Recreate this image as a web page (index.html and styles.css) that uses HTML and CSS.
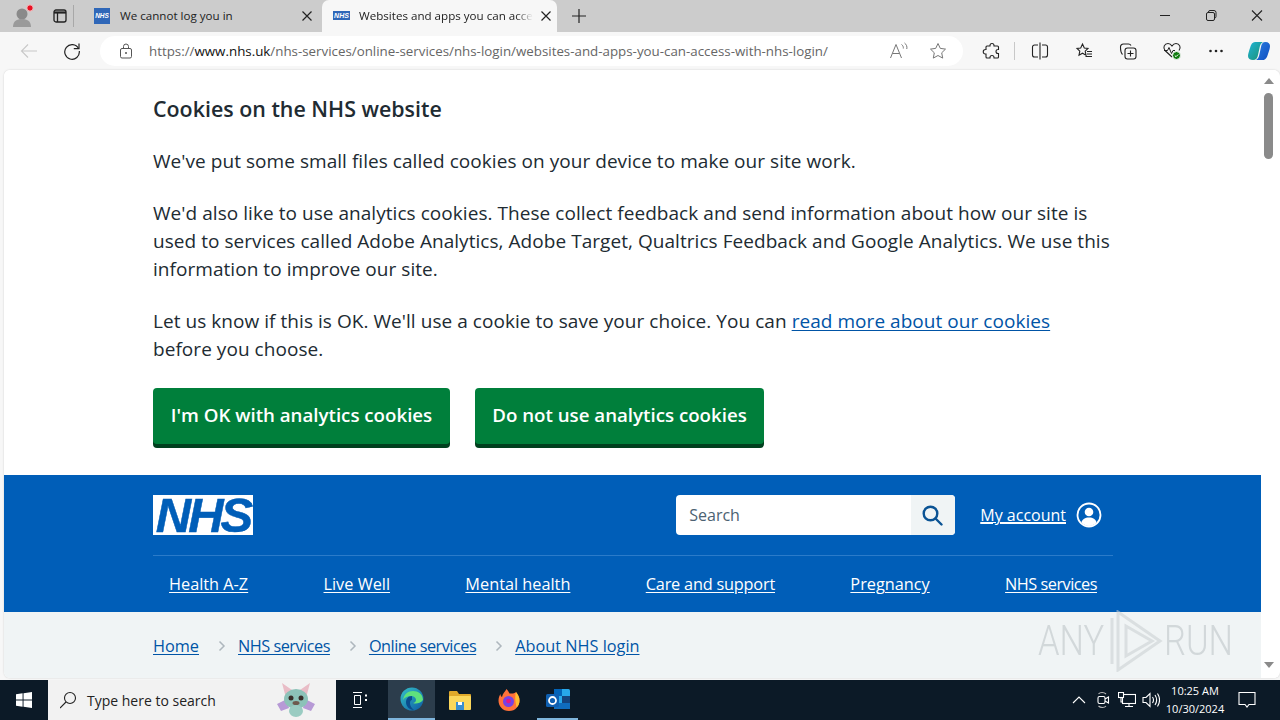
FILE: index.html
```html
<!DOCTYPE html>
<html lang="en">
<head>
<meta charset="utf-8">
<title>Websites and apps you can access with NHS login</title>
<link rel="stylesheet" href="styles.css">
</head>
<body>
<div class="desktop">
  <div class="tabstrip">
    <div class="strip-btn profile">
      <svg width="24" height="26" viewBox="-1 0 24 26"><circle cx="11" cy="11" r="5.500" fill="#8a8a8a"/><path d="M2 24c0-6 4-8 9-8s9 2 9 8z" fill="#9a9a9a"/><circle cx="19" cy="5" r="3.200" fill="#e81123" stroke="#f3c9c9"/></svg>
    </div>
    <div class="strip-btn tabs-icon">
      <svg width="16" height="16" viewBox="0 0 16 16" fill="none" stroke="#222" stroke-width="1.300"><rect x="2" y="2" width="12" height="12" rx="2"/><path d="M2 4.500h12" stroke-width="2.200"/><path d="M5.500 4v10"/></svg>
    </div>
    <div class="strip-sep"></div>
    <div class="tab">
      <span class="favicon favicon-big">NHS</span>
      <span class="tab-title">We cannot log you in</span>
      <svg class="tab-x" width="10" height="10" viewBox="0 0 10 10" stroke="#222" stroke-width="1.200"><path d="M0.500 0.500l9 9M9.500 0.500l-9 9"/></svg>
    </div>
    <div class="tab tab-active">
      <span class="favicon">NHS</span>
      <span class="tab-title">Websites and apps you can acce</span>
      <svg class="tab-x" width="10" height="10" viewBox="0 0 10 10" stroke="#222" stroke-width="1.200"><path d="M0.500 0.500l9 9M9.500 0.500l-9 9"/></svg>
    </div>
    <svg class="new-tab" width="16" height="16" viewBox="0 0 16 16" stroke="#222" stroke-width="1.200"><path d="M8 1v14M1 8h14"/></svg>
    <div class="win-controls">
      <svg width="46" height="32" viewBox="0 0 46 32" stroke="#222" fill="none"><path d="M18 15.500h10"/></svg>
      <svg width="46" height="32" viewBox="0 0 46 32" stroke="#222" fill="none"><rect x="18.500" y="12.500" width="8" height="8" rx="1.500"/><path d="M20.500 12.500v-.5a1.500 1.500 0 0 1 1.500-1.500h4a2 2 0 0 1 2 2v4a1.500 1.500 0 0 1-1.500 1.500"/></svg>
      <svg width="46" height="32" viewBox="0 0 46 32" stroke="#222" fill="none" stroke-width="1.100"><path d="M18 10.500l10 10M28 10.500l-10 10"/></svg>
    </div>
  </div>

  <div class="toolbar">
    <div class="tool-btn">
      <svg width="18" height="18" viewBox="-1 0 18 18" fill="none" stroke="#c8c8c8" stroke-width="1.100"><path d="M17 9H1.500M8 2.500L1.500 9 8 15.500"/></svg>
    </div>
    <div class="tool-btn">
      <svg width="18" height="18" viewBox="0 0 18 18" fill="none" stroke="#222" stroke-width="1.200"><path d="M15.500 6.500A7.300 7.300 0 1 0 16.300 9"/><path d="M16 1.500v5.200h-5.200"/></svg>
    </div>
    <div class="address">
      <svg class="lock" width="14" height="16" viewBox="0 0 14 16" fill="none" stroke="#555" stroke-width="1"><rect x="1.500" y="5.500" width="11" height="9.500" rx="1.500"/><path d="M4.500 5.500V3.500a2.500 2.500 0 0 1 5 0v2"/><circle cx="7" cy="10" r="1" fill="#555" stroke="none"/></svg>
      <span class="url"><span class="url-dim">https://</span>www.nhs.uk<span class="url-dim">/nhs-services/online-services/nhs-login/websites-and-apps-you-can-access-with-nhs-login/</span></span>
      <svg class="read-aloud" width="20" height="18" viewBox="0 0 20 18" fill="none" stroke="#777" stroke-width="1"><path d="M1.500 16L7 2.500 12.500 16M3.500 11.500h7"/><path d="M12.500 2.500c1.500 1 2 2.500 1.800 4M15.500 1c2 1.500 2.800 3.500 2.300 6"/></svg>
      <svg class="star" width="18" height="18" viewBox="0 0 18 18" fill="none" stroke="#777" stroke-width="1"><path d="M9 1.500l2.300 4.900 5.200.7-3.800 3.700 1 5.300L9 13.500l-4.700 2.600 1-5.300L1.500 7.100l5.200-.7z"/></svg>
    </div>
    <div class="tool-group">
      <div class="tool-btn">
        <svg width="18" height="18" viewBox="-1 0 18 18" fill="none" stroke="#222" stroke-width="1.100"><path d="M7 3.500a2 2 0 0 1 4 0v.5h3.500a1 1 0 0 1 1 1v2.500H15a2 2 0 0 0 0 4h.5V15a1 1 0 0 1-1 1H11v-.5a2 2 0 0 0-4 0v.5H4a1 1 0 0 1-1-1v-3H2.500a2 2 0 0 1 0-4.500H3V5a1 1 0 0 1 1-1h3z"/></svg>
      </div>
      <div class="tool-sep"></div>
      <div class="tool-btn">
        <svg width="18" height="18" viewBox="0 0 18 18" fill="none" stroke="#222" stroke-width="1.100"><path d="M7 3H3.500a2 2 0 0 0-2 2v8a2 2 0 0 0 2 2H7M11 3h3.500a2 2 0 0 1 2 2v8a2 2 0 0 1-2 2H11"/><path d="M9 .5v17"/></svg>
      </div>
      <div class="tool-btn">
        <svg width="18" height="18" viewBox="0 0 18 18" fill="none" stroke="#222" stroke-width="1.100"><path d="M7.500 2l1.800 4 3.700.5-2.800 2.600.8 4.100-3.500-2-3.500 2 .8-4.100L2 6.500 5.700 6z"/><path d="M12 9.500h5M12 12h5M10.500 14.500h6.500"/></svg>
      </div>
      <div class="tool-btn">
        <svg width="18" height="18" viewBox="0 0 18 18" fill="none" stroke="#222" stroke-width="1.100"><rect x="6" y="6" width="11" height="11" rx="2.500"/><path d="M11.500 8.500v6M8.500 11.500h6"/><path d="M3.500 12.500C2 11 1.500 9.500 1.500 5a3 3 0 0 1 3-3h5a3 3 0 0 1 2.500 1.500"/></svg>
      </div>
      <div class="tool-btn">
        <svg width="20" height="20" viewBox="0 0 20 20" fill="none"><path d="M10 16L3 9.500C.5 6.500 2.500 2.500 6 2.500c2 0 3 1 4 2.500 1-1.500 2-2.500 4-2.500 3.500 0 5.500 4 3 7" stroke="#222" stroke-width="1.100"/><path d="M2 9.500h3.500l1.500-3 2.500 6 1.500-3h2" stroke="#222" stroke-width="1"/><circle cx="14.500" cy="14.500" r="4" fill="#107c10" stroke="#f7f7f7"/><path d="M12.800 14.500l1.200 1.200 2.200-2.200" stroke="#fff"/></svg>
      </div>
      <div class="tool-btn">
        <svg width="16" height="4" viewBox="0 0 16 4" fill="#222"><circle cx="2.500" cy="2" r="1.300"/><circle cx="8" cy="2" r="1.300"/><circle cx="13.500" cy="2" r="1.300"/></svg>
      </div>
      <div class="tool-btn copilot">
        <svg width="24" height="24" viewBox="0 0 24 24"><defs><linearGradient id="cpa" x1="0" y1="0" x2="1" y2="1"><stop offset="0" stop-color="#1fb5d8"/><stop offset="1" stop-color="#1b8f6f"/></linearGradient><linearGradient id="cpb" x1="0" y1="0" x2="1" y2="1"><stop offset="0" stop-color="#2a7de1"/><stop offset="1" stop-color="#0f4fc0"/></linearGradient></defs><path d="M8 3h8c-2 1-3 3-3.500 6L11 16c-.5 3-2 5-5 5-3 0-5-1.500-5-4 0-2 1-5 2-8 1-4 2.500-6 5-6z" fill="url(#cpa)"/><path d="M16 21H9c2-1 3-3 3.500-6l1.500-7c.5-3 1.500-5 4.500-5 3 0 4.500 2 4.500 4 0 2-1 5-2 8-1 3.500-2.500 6-5 6z" fill="url(#cpb)"/></svg>
      </div>
    </div>
  </div>

  <div class="viewport">
    <main class="page">
      <section class="cookies">
        <div class="container">
          <h2 class="cookies-title">Cookies on the NHS website</h2>
          <p class="copy">We've put some small files called cookies on your device to make our site work.</p>
          <p class="copy">We'd also like to use analytics cookies. These collect feedback and send information about how our site is used to services called Adobe Analytics, Adobe Target, Qualtrics Feedback and Google Analytics. We use this information to improve our site.</p>
          <p class="copy">Let us know if this is OK. We'll use a cookie to save your choice. You can <a class="link" href="#">read more about our cookies</a> before you choose.</p>
          <div class="cookie-actions">
            <button class="btn btn-ok" type="button">I'm OK with analytics cookies</button>
            <button class="btn btn-no" type="button">Do not use analytics cookies</button>
          </div>
        </div>
      </section>
      <header class="site-header">
        <div class="container">
          <div class="header-top">
            <a class="nhs-logo" href="#">NHS</a>
            <form class="search">
              <span class="search-field">Search</span>
              <span class="search-btn">
                <svg width="22" height="22" viewBox="1 0 22 22" fill="none" stroke="#0b5394" stroke-width="2.400"><circle cx="9.500" cy="9.500" r="6.800"/><path d="M14.500 14.500l6 6" stroke-linecap="round"/></svg>
              </span>
            </form>
            <a class="account" href="#">
              <span class="account-text">My account</span>
              <svg width="26" height="26" viewBox="0 0 26 26"><circle cx="13" cy="13" r="11.500" fill="#005eb8" stroke="#fff" stroke-width="1.800"/><circle cx="13" cy="10" r="4.300" fill="#fff"/><path d="M5.500 20.500c.8-3.500 3.500-5 7.500-5s6.700 1.500 7.500 5c-2 2-4.500 3.500-7.500 3.500s-5.500-1.500-7.500-3.500z" fill="#fff"/></svg>
            </a>
          </div>
          <nav class="main-nav">
            <a href="#">Health A-Z</a>
            <a href="#">Live Well</a>
            <a href="#">Mental health</a>
            <a class="snug" href="#">Care and support</a>
            <a href="#">Pregnancy</a>
            <a class="tight" href="#">NHS services</a>
          </nav>
        </div>
      </header>
      <nav class="breadcrumb">
        <div class="container crumbs">
          <a class="link" href="#">Home</a>
          <svg class="crumb-sep" width="8" height="12" viewBox="0 0 8 12" fill="none" stroke="#aeb7bd" stroke-width="1.500"><path d="M1.500 1.500L6 6l-4.500 4.500"/></svg>
          <a class="link tight" href="#">NHS services</a>
          <svg class="crumb-sep" width="8" height="12" viewBox="0 0 8 12" fill="none" stroke="#aeb7bd" stroke-width="1.500"><path d="M1.500 1.500L6 6l-4.500 4.500"/></svg>
          <a class="link tight" href="#">Online services</a>
          <svg class="crumb-sep" width="8" height="12" viewBox="0 0 8 12" fill="none" stroke="#aeb7bd" stroke-width="1.500"><path d="M1.500 1.500L6 6l-4.500 4.500"/></svg>
          <a class="link" href="#">About NHS login</a>
        </div>
      </nav>
    </main>
    <div class="scrollbar">
      <span class="arrow-up"></span>
      <span class="thumb"></span>
      <span class="arrow-down"></span>
    </div>
    <div class="watermark" aria-hidden="true">
      <span class="wm-word">ANY</span>
      <svg width="60" height="62" viewBox="0 0 60 62" fill="none" stroke="rgba(200,205,208,.55)" stroke-width="3"><path d="M8 8v46M14 2v58l42-29z"/><path d="M22 16v30l26-15z"/></svg>
      <span class="wm-word">RUN</span>
    </div>
  </div>

  <footer class="taskbar">
    <div class="start">
      <svg width="16" height="16" viewBox="0 0 17 17" fill="#fff"><path d="M0 2.400l7-1v6.600H0zM8 1.300L17 0v8H8zM0 9h7v6.600l-7-1zM8 9h9v8l-9-1.300z"/></svg>
    </div>
    <div class="task-search">
      <svg width="18" height="18" viewBox="1 0 18 18" fill="none" stroke="#222" stroke-width="1.100"><circle cx="11" cy="7" r="5.500"/><path d="M7 11l-6 6"/></svg>
      <span class="task-search-text">Type here to search</span>
      <svg class="mascot" width="40" height="36" viewBox="0 0 40 36"><path d="M11 17L1 22l4 7 8-3zM29 17l10 5-4 7-8-3z" fill="#b79ad6"/><path d="M10 16L6 1l10 7zM30 16l4-15-10 7z" fill="#e9bcc6"/><ellipse cx="20" cy="17" rx="12" ry="10" fill="#8cc2b8"/><ellipse cx="20" cy="29" rx="7" ry="6" fill="#9accc2"/><circle cx="15" cy="16" r="2.500" fill="#3a2f2a"/><circle cx="25" cy="16" r="2.500" fill="#3a2f2a"/><ellipse cx="20" cy="21" rx="3.500" ry="2" fill="#6d5a4e"/></svg>
    </div>
    <div class="task-slot">
      <svg width="16" height="16" viewBox="0 0 16 16" fill="none" stroke="#fff"><path d="M1 .5h9M1 15.500h9M2.500 3.500h6v9h-6z"/><path d="M13 2.500h2v2h-2zM13 7h2v2h-2z" fill="#fff" stroke="none"/></svg>
    </div>
    <div class="task-slot task-app task-active">
      <svg width="24" height="24" viewBox="0 0 24 24"><defs><linearGradient id="edge" x1="0" y1="0" x2="1" y2="1"><stop offset="0" stop-color="#35c1c8"/><stop offset="1" stop-color="#0c59a4"/></linearGradient></defs><circle cx="12" cy="12" r="11.500" fill="url(#edge)"/><path d="M23 13c0-6-5-9-10-9-5 0-9 3-10 9 2-3 5-4 8-4 3 0 5 2 5 4s-2 3-3 3c2 1 7 1 10-3z" fill="#5fe07c"/><path d="M12 9c-4 0-6 3-6 6 0 4 3 8 8 8-3-2-4-5-4-7s1-3 2-3" fill="#0a4c8d"/></svg>
    </div>
    <div class="task-slot task-app">
      <svg width="24" height="22" viewBox="0 0 24 22"><path d="M1 3a1 1 0 0 1 1-1h7l2 3h11a1 1 0 0 1 1 1v3H1z" fill="#e0a92a"/><rect x="1" y="7" width="22" height="14" rx="1" fill="#fbd75b"/><rect x="8" y="13" width="8" height="8" fill="#3b8ed0"/><rect x="10" y="13" width="4" height="3" fill="#fff"/></svg>
    </div>
    <div class="task-slot task-app">
      <svg width="24" height="24" viewBox="0 0 24 24"><path d="M12 23C5.500 23 1.500 18 1.500 12.500c0-3 1-5 2-6.500 0 1.500.5 2.500 1.500 3C5.500 5.500 8 4 9.500 1c2 2 2.500 3.500 3 4.500 4 .5 6-1 6.500-1.500 2 2.500 3.500 5 3.500 8.500C22.500 18 18.500 23 12 23z" fill="#ff7139"/><path d="M19 4c2 2.500 3.500 5 3.500 8.500 0 3-1 5-3 7-1-6-2-10-.5-15.500z" fill="#ffbd2e"/><circle cx="11.500" cy="13.500" r="5.500" fill="#7542e5"/><circle cx="11.500" cy="13" r="2.300" fill="#e31587"/></svg>
    </div>
    <div class="task-slot task-app task-running">
      <svg width="26" height="24" viewBox="0 0 26 24"><rect x="9" y="1" width="16" height="20" rx="1.500" fill="#28a8ea"/><rect x="9" y="1" width="8" height="7" fill="#0364b8"/><rect x="17" y="8" width="8" height="7" fill="#14447d"/><rect x="9" y="15" width="16" height="6" fill="#0f6cbd"/><rect x="1" y="6" width="13" height="13" rx="1.500" fill="#0f5fb0"/><circle cx="7.500" cy="12.500" r="3.500" fill="none" stroke="#fff" stroke-width="1.800"/></svg>
    </div>
    <div class="tray">
      <div class="tray-slot"><svg width="14" height="8" viewBox="0 0 14 8" fill="none" stroke="#fff" stroke-width="1.100"><path d="M1 7l6-6 6 6"/></svg></div>
      <div class="tray-slot"><svg width="14" height="18" viewBox="0 0 14 18" fill="none" stroke="#fff" stroke-width="1.100"><rect x="2" y="5.500" width="7" height="7" rx="1.500"/><path d="M9 8l3.500-2v6L9 10"/><path d="M2.500 3C4 1 8 1 10 3M2.500 15c2 2 6 2 7.500 0" stroke="#bbb"/></svg></div>
      <div class="tray-slot"><svg width="18" height="16" viewBox="0 0 18 16" fill="none" stroke="#fff" stroke-width="1.100"><rect x="4.500" y="2.500" width="13" height="9"/><path d="M11 11.500v3M7 14.500h8"/><rect x=".5" y=".5" width="5" height="5" fill="#0c1a27"/><path d="M3 5.500V10h2"/></svg></div>
      <div class="tray-slot"><svg width="18" height="16" viewBox="0 0 18 16" fill="none" stroke="#fff" stroke-width="1.100"><path d="M1 5.500h3l4-4v13l-4-4H1z"/><path d="M10.500 5c1.200 1.800 1.200 4.200 0 6M13 3c2 3 2 7 0 10M15.500 1.500c2.500 4 2.500 9 0 13"/></svg></div>
      <div class="clock"><span>10:25 AM</span><span>10/30/2024</span></div>
      <svg class="notify" width="18" height="16" viewBox="0 0 18 16" fill="none" stroke="#fff" stroke-width="1.100"><path d="M1 .5h16v12h-6l-2 2.500-2-2.500H1z"/></svg>
    </div>
  </footer>
</div>
</body>
</html>
```

FILE: styles.css
```css
* { box-sizing: border-box; }
html, body { margin: 0; padding: 0; }
body { font-family: "Open Sans", "Noto Sans", sans-serif; color: #212b32; background: #f7f7f7; }
svg { display: block; flex: none; }
.desktop { width: 1280px; height: 720px; overflow: hidden; display: flex; flex-direction: column; background: #f7f7f7; }

/* tab strip */
.tabstrip { height: 32px; flex: none; background: #cccccc; display: flex; align-items: center; }
.strip-btn { display: flex; align-items: center; justify-content: center; }
.profile { width: 44px; }
.tabs-icon { width: 32px; margin-right: -3px; }
.strip-sep { width: 1px; height: 22px; background: #a8a8a8; margin-right: 8px; }
.tab { width: 238px; height: 32px; display: flex; align-items: center; padding: 0 6px 1px 12px; font-size: 11.600px; color: #222; }
.tab-active { width: 235px; margin-left: 2px; background: #f7f7f7; border-radius: 7px 7px 0 0; padding: 0 4px 1px 11px; }
.favicon { width: 17px; height: 9px; background: #2f67b8; color: #fff; font: italic 700 7px/9px "Liberation Sans", sans-serif; text-align: center; flex: none; }
.favicon-big { width: 16px; height: 16px; line-height: 16px; font-size: 6.500px; }
.tab-title { flex: 1; margin-left: 10px; white-space: nowrap; min-width: 0; }
.tab-active .tab-title { margin-left: 9px; -webkit-mask-image: linear-gradient(90deg, #000 90%, transparent); mask-image: linear-gradient(90deg, #000 90%, transparent); }
.tab-x { margin: 0 2px 0 8px; }
.new-tab { margin-left: 14px; }
.win-controls { margin-left: auto; display: flex; }

/* toolbar */
.toolbar { height: 38px; flex: none; display: flex; align-items: center; background: #f7f7f7; padding-left: 6px; }
.tool-btn { width: 44px; height: 32px; display: flex; align-items: center; justify-content: center; flex: none; }
.address { width: 863px; height: 30px; margin-left: 6px; background: #fff; border-radius: 15px; display: flex; align-items: center; padding-left: 19px; font-size: 13.340px; flex: none; }
.url { margin-left: 16px; color: #111; white-space: nowrap; }
.url-dim { color: #666; }
.read-aloud { margin-left: auto; margin-right: 20px; }
.star { margin-right: 16px; }
.tool-group { display: flex; align-items: center; margin-left: 6px; }
.tool-sep { width: 1px; height: 18px; background: #c8c8c8; margin: 0 3px 0 1px; }
.copilot { width: 42px; }

/* viewport */
.viewport { position: relative; flex: none; width: 1276px; height: 608px; margin: 0 auto 0 4px; background: #fff; border-radius: 6px; box-shadow: 0 0 2px rgba(0,0,0,.18); overflow: hidden; display: flex; }
.page { flex: none; width: 1257px; }
.container { width: 960px; margin-left: 149px; }
.scrollbar { flex: none; width: 15px; height: 100%; background: #fff; display: flex; flex-direction: column; align-items: center; padding-top: 8px; }
.arrow-up { width: 0; height: 0; border: 5px solid transparent; border-top: 0; border-bottom: 6px solid #8a8a8a; }
.thumb { width: 9px; height: 66px; margin-top: 9px; background: #8a8a8a; border-radius: 5px; }
.arrow-down { width: 0; height: 0; margin-top: auto; margin-bottom: 10px; border: 5px solid transparent; border-bottom: 0; border-top: 6px solid #8a8a8a; }

/* cookies */
.cookies { height: 405px; padding-top: 23px; background: #fff; }
.cookies-title { margin: 0 0 22px; font-size: 21.400px; line-height: 32px; font-weight: 600; }
.copy { margin: 0 0 24px; font-size: 19px; line-height: 28px; letter-spacing: .05px; }
.link { color: #0054a6; text-decoration: underline; text-underline-offset: 2px; }
.tight { letter-spacing: -.5px; }
.snug { letter-spacing: -.2px; }
.cookie-actions { display: flex; gap: 25px; margin-top: 25px; }
.btn { height: 56px; border: 0; border-radius: 4px; background: #007f3b; box-shadow: 0 4px 0 #00401e; color: #fff; font: 600 18.700px/28px "Open Sans", "Noto Sans", sans-serif; padding: 0 0 2px; }
.btn-ok { width: 297px; }
.btn-no { width: 289px; }

/* header */
.site-header { height: 137px; background: #005eb8; padding-top: 20px; color: #fff; }
.header-top { display: flex; align-items: center; height: 40px; padding-right: 11px; }
.nhs-logo { width: 100px; height: 40px; background: #fff; color: #005eb8; font: italic 700 49px/40px "Liberation Sans", sans-serif; letter-spacing: -3px; text-align: center; text-decoration: none; -webkit-text-stroke: .5px #005eb8; }
.search { width: 279px; height: 40px; margin-left: auto; display: flex; border-radius: 4px; overflow: hidden; background: #fff; }
.search-field { flex: 1; padding-left: 13px; font-size: 16px; line-height: 40px; color: #4c6272; }
.search-btn { width: 44px; background: #f0f4f5; display: flex; align-items: center; justify-content: center; }
.account { display: flex; align-items: center; gap: 10px; margin-left: 25px; color: #fff; }
.account-text { font-size: 16px; text-decoration: underline; text-underline-offset: 2px; }
.main-nav { height: 57px; margin-top: 20px; padding: 0 16px; border-top: 1px solid #2b7bc9; display: flex; align-items: center; justify-content: space-between; font-size: 16.300px; }
.main-nav a { color: #fff; text-decoration: underline; text-underline-offset: 2px; white-space: nowrap; }

/* breadcrumb */
.breadcrumb { height: 66px; background: #f0f4f5; }
.crumbs { display: flex; align-items: center; height: 66px; padding-top: 2px; font-size: 16.300px; }
.crumb-sep { margin: 0 12px 0 19px; }

/* watermark */
.watermark { position: absolute; left: 1034px; top: 540px; display: flex; align-items: center; color: rgba(190,196,200,.6); font: 300 42px/62px Roboto, "Liberation Sans", sans-serif; }
.wm-word { width: 66px; transform: scaleX(.82); transform-origin: left center; white-space: nowrap; }

/* taskbar */
.taskbar { height: 40px; flex: none; margin-top: 2px; background: #0c1a27; display: flex; align-items: center; color: #fff; }
.start { width: 48px; height: 40px; display: flex; align-items: center; justify-content: center; }
.task-search { width: 288px; height: 40px; background: #f2f2f2; display: flex; align-items: center; padding-left: 12px; position: relative; color: #222; }
.task-search-text { margin-left: 9px; font-size: 14px; }
.mascot { position: absolute; left: 228px; top: 2px; }
.task-slot { width: 48px; height: 40px; display: flex; align-items: center; justify-content: center; flex: none; }
.task-app { width: 49px; }
.task-active { width: 47px; background: #2c3d4c; border-bottom: 2px solid #7fb5dc; margin-left: 4px; }
.task-running { position: relative; }
.task-running::after { content: ""; position: absolute; left: 4px; right: 4px; bottom: 0; height: 2px; background: #7fb5dc; }
.tray { margin-left: auto; display: flex; align-items: center; height: 40px; }
.tray-slot { width: 24px; display: flex; justify-content: center; }
.clock { width: 60px; margin-left: 2px; display: flex; flex-direction: column; align-items: center; font-size: 11px; line-height: 18px; white-space: nowrap; }
.notify { margin: 0 24px 0 13px; }
```
